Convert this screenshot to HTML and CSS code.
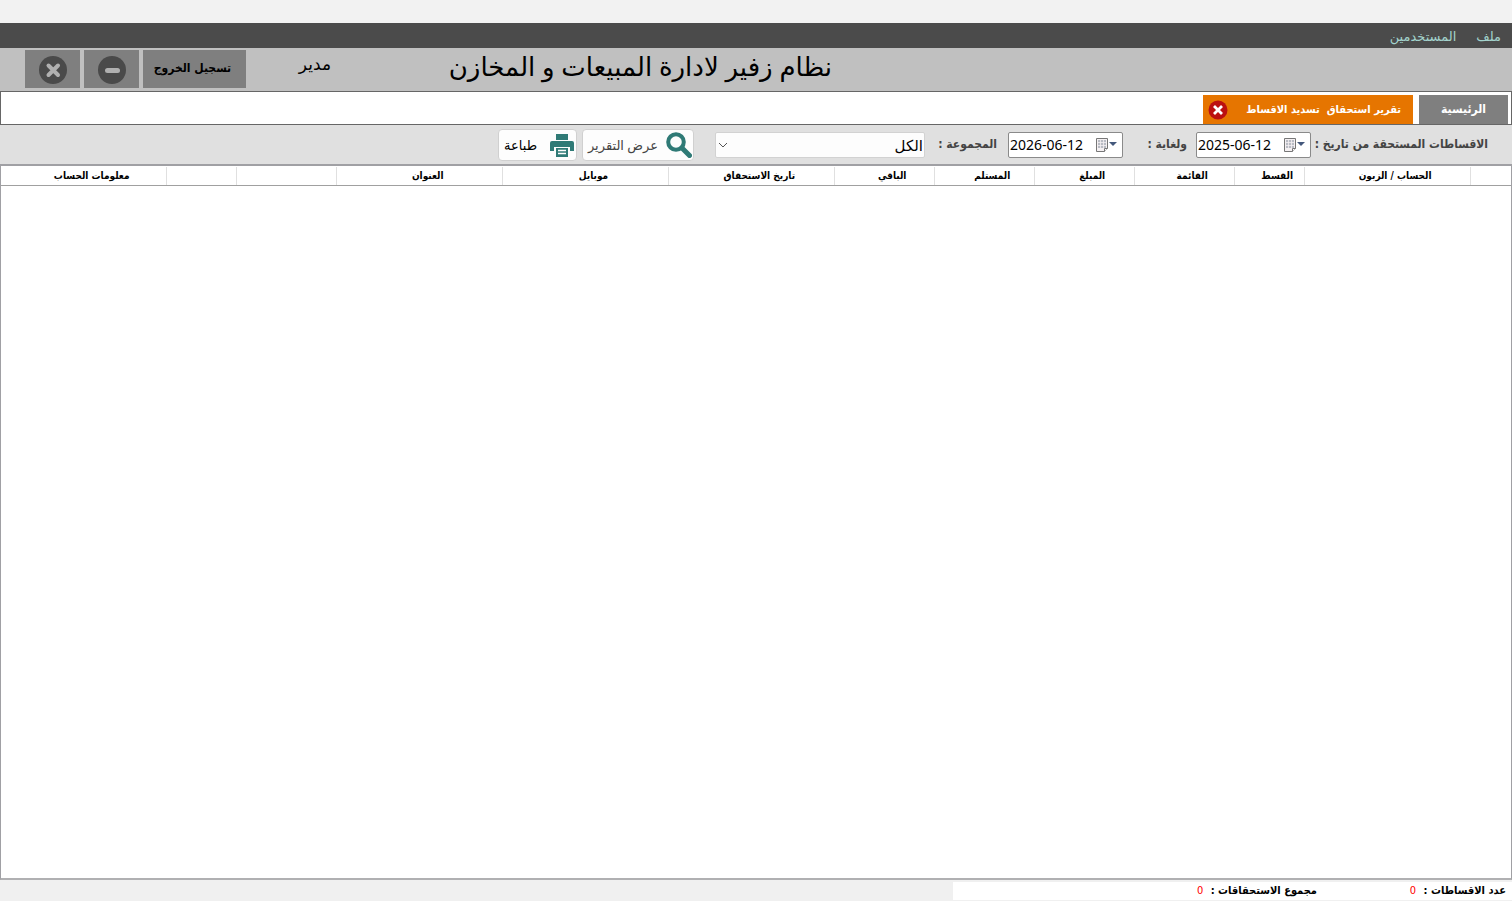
FILE: index.html
```html
<!DOCTYPE html>
<html lang="ar" dir="rtl">
<head>
<meta charset="utf-8">
<title>نظام زفير لادارة المبيعات و المخازن</title>
<link rel="stylesheet" href="styles.css">
</head>
<body>
<div class="app">
  <nav class="menu">
    <a href="#file">ملف</a>
    <a href="#users">المستخدمين</a>
  </nav>

  <header class="header">
    <button class="head-btn" type="button" aria-label="اغلاق">
      <svg width="28" height="28" viewBox="0 0 28 28"><circle cx="14" cy="14" r="14" fill="#4a4a4a"/><path d="M9.500 9.500l9.500 9.500M19 9.500l-9.500 9.500" stroke="#b0b0b0" stroke-width="4" stroke-linecap="round"/></svg>
    </button>
    <button class="head-btn" type="button" aria-label="تصغير">
      <svg width="28" height="28" viewBox="0 0 28 28"><circle cx="14" cy="14" r="14" fill="#4a4a4a"/><path d="M9.500 14.500h10" stroke="#b0b0b0" stroke-width="5" stroke-linecap="round"/></svg>
    </button>
    <button class="head-btn logout" type="button">تسجيل الخروج</button>
    <span class="user">مدير</span>
    <h1 class="title">نظام زفير لادارة المبيعات و المخازن</h1>
  </header>

  <div class="tabs">
    <a class="tab" href="#home">الرئيسية</a>
    <div class="tab active">
      <a href="#report">تقرير استحقاق&nbsp; تسديد الاقساط</a>
      <button class="tab-close" type="button" aria-label="اغلاق التبويب">
        <svg width="20" height="20" viewBox="0 0 20 20"><circle cx="10" cy="10" r="9.500" fill="#bc1010"/><path d="M6 6l8 8M14 6l-8 8" stroke="#fff" stroke-width="2.800"/></svg>
      </button>
    </div>
  </div>

  <form class="toolbar">
    <label class="label from" for="from">الاقساطات المستحقة من تاريخ :</label>
    <div class="date">
      <button type="button" class="date-btn" aria-label="اختيار التاريخ">
        <svg width="22" height="14" viewBox="0 0 22 14"><path d="M.5.5h11v10l-3 3h-8z" fill="#f4f0f2" stroke="#777"/><path d="M2 2h8v8H2z" fill="#b9bcc4"/><path d="M2 4.500h8M2 7.500h8M4.500 2v8M7.500 2v8" stroke="#f4f0f2" stroke-width=".8"/><path d="M8.500 13.500v-3h3" fill="#fff" stroke="#777"/><path d="M13 4h8l-4 4z" fill="#44587c"/></svg>
      </button>
      <input id="from" type="text" dir="ltr" value="2025-06-12">
    </div>
    <label class="label to" for="to">ولغاية :</label>
    <div class="date">
      <button type="button" class="date-btn" aria-label="اختيار التاريخ">
        <svg width="22" height="14" viewBox="0 0 22 14"><path d="M.5.5h11v10l-3 3h-8z" fill="#f4f0f2" stroke="#777"/><path d="M2 2h8v8H2z" fill="#b9bcc4"/><path d="M2 4.500h8M2 7.500h8M4.500 2v8M7.500 2v8" stroke="#f4f0f2" stroke-width=".8"/><path d="M8.500 13.500v-3h3" fill="#fff" stroke="#777"/><path d="M13 4h8l-4 4z" fill="#44587c"/></svg>
      </button>
      <input id="to" type="text" dir="ltr" value="2026-06-12">
    </div>
    <label class="label group" for="group">المجموعة :</label>
    <div class="select">
      <select id="group"><option>الكل</option></select>
      <svg class="chevron" width="10" height="6" viewBox="0 0 10 6"><path d="M1 1l4 4 4-4" fill="none" stroke="#555"/></svg>
    </div>
    <button class="action show" type="button">
      <svg width="26" height="26" viewBox="0 0 26 26" fill="none" stroke="#2f7a76"><circle cx="10" cy="10" r="7.800" stroke-width="4"/><path d="M16 16l7.500 7.500" stroke-width="5" stroke-linecap="round"/></svg>
      <span>عرض التقرير</span>
    </button>
    <button class="action print" type="button">
      <svg width="24" height="24" viewBox="0 0 24 24" fill="#2f7a76"><path d="M6 1h12v6H6z"/><path d="M2 8h20q2 0 2 2v8h-4v-4H4v4H0v-8q0-2 2-2z"/><path d="M6 15h12v9H6z"/><path d="M8 17.500h8M8 20.500h8" stroke="#fdfdfd" stroke-width="1.400"/></svg>
      <span>طباعة</span>
    </button>
  </form>

  <main class="grid">
    <table>
      <colgroup>
        <col class="c-mark"><col class="c-wide"><col class="c-small"><col class="c-mid"><col class="c-mid"><col class="c-mid"><col class="c-mid"><col class="c-wide"><col class="c-wide"><col class="c-wide"><col class="c-mid"><col class="c-small"><col class="c-wide">
      </colgroup>
      <thead>
        <tr>
          <th></th><th>الحساب / الزبون</th><th>القسط</th><th>القائمة</th><th>المبلغ</th><th>المستلم</th><th>الباقي</th><th>تاريخ الاستحقاق</th><th>موبايل</th><th>العنوان</th><th></th><th></th><th>معلومات الحساب</th>
        </tr>
      </thead>
      <tbody></tbody>
    </table>
  </main>

  <footer class="footer">
    <div class="totals">
      <div class="total">عدد الاقساطات : <span>0</span></div>
      <div class="total">مجموع الاستحقاقات : <span>0</span></div>
    </div>
  </footer>
</div>
</body>
</html>
```
FILE: styles.css
```css
* { box-sizing: border-box; }

body {
  margin: 0;
  background: #f2f2f2;
  color: #000;
  font-family: "Open Sans", "DejaVu Sans", sans-serif;
  font-size: 13px;
}

button, input, select { font: inherit; color: inherit; }
button { padding: 0; border: 0; background: none; }
a { color: inherit; text-decoration: none; }
svg { display: block; flex: none; }

.app {
  display: flex;
  flex-direction: column;
  min-height: 100vh;
  padding-top: 23px;
}

.menu {
  display: flex;
  align-items: center;
  gap: 20px;
  height: 25px;
  padding: 0 11px;
  background: #4b4b4b;
  color: #a3d3cd;
  font-size: 13px;
}

.header {
  display: flex;
  direction: ltr;
  align-items: flex-start;
  gap: 4px;
  height: 43px;
  padding: 2px 0 0 25px;
  background: #c0c0c0;
}

.head-btn {
  display: flex;
  align-items: center;
  justify-content: center;
  width: 55px;
  height: 38px;
  padding-top: 2px;
  background: #7f7f7f;
}

.head-btn.logout,
.tabs,
.label,
th,
.totals {
  font-family: "DejaVu Sans Condensed", "DejaVu Sans", sans-serif;
  font-weight: 700;
}

.head-btn.logout {
  width: 103px;
  padding: 0 4px 2px 0;
  font-size: 12px;
}

.user {
  width: 81px;
  font-size: 17px;
  line-height: 28px;
  text-align: right;
  direction: rtl;
}

.title {
  width: 497px;
  margin: 0;
  font-size: 26px;
  font-weight: 400;
  line-height: 32px;
  text-align: right;
  direction: rtl;
  white-space: nowrap;
}

.tabs {
  display: flex;
  gap: 6px;
  height: 34px;
  padding: 3px 3px 0;
  border: 1px solid #666;
  background: #fff;
  color: #fff;
  font-size: 12px;
}

.tab {
  width: 89px;
  background: #7f7f7f;
  line-height: 28px;
  text-align: center;
}

.tab.active {
  display: flex;
  align-items: center;
  justify-content: space-between;
  width: 210px;
  padding: 0 12px 0 5px;
  background: #e67500;
  font-size: 11px;
  white-space: nowrap;
}

.toolbar {
  display: flex;
  align-items: center;
  height: 39px;
  padding: 0 24px;
  background: #e0e0e0;
}

.label {
  flex: none;
  padding-bottom: 2px;
  color: #444;
  font-size: 12px;
  white-space: nowrap;
}

.from { width: 177px; }
.to { width: 73px; padding-right: 9px; }
.group { width: 83px; padding-right: 11px; }

.date {
  display: flex;
  align-items: center;
  width: 115px;
  height: 26px;
  border: 1px solid #8a8a8a;
  border-radius: 2px;
  background: #fff;
}

.date-btn { width: 22px; margin-right: 4px; direction: ltr; }

.date input {
  flex: 1;
  min-width: 0;
  height: 24px;
  padding: 0 0 0 1px;
  border: 0;
  outline: 0;
  background: none;
  font-family: "Noto Sans", sans-serif;
  font-size: 14px;
}

.select {
  position: relative;
  width: 210px;
  height: 26px;
}

.select select {
  width: 100%;
  height: 26px;
  padding: 0 1px;
  border: 1px solid #d2d2d2;
  border-radius: 2px;
  background: #fdfdfd;
  font-size: 15px;
  appearance: none;
}

.chevron {
  position: absolute;
  top: 10px;
  left: 3px;
}

.action {
  display: flex;
  align-items: center;
  height: 32px;
  border: 1px solid #d0d0d0;
  border-radius: 4px;
  background: #fdfdfd;
  font-size: 13px;
  white-space: nowrap;
}

.show {
  gap: 8px;
  width: 112px;
  margin-right: 21px;
  padding: 0 1px;
  color: #444;
}

.print {
  gap: 13px;
  width: 79px;
  margin-right: 5px;
  padding: 0 2px;
}

.grid {
  flex: 1;
  padding-top: 1px;
  border: 1px solid #a0a0a4;
  border-bottom: 2px solid #b0b0b2;
  border-top: 2px solid #a0a0a4;
  background: #fff;
}

table {
  width: 100%;
  table-layout: fixed;
  border-collapse: collapse;
}

.c-mark { width: 41px; }
.c-small { width: 70px; }
.c-mid { width: 100px; }

th {
  height: 18px;
  padding: 1px 0 0 16px;
  border-bottom: 1px solid #a0a0a0;
  border-left: 1px solid #e0e0e0;
  font-size: 10px;
  line-height: 14px;
  white-space: nowrap;
}

th:last-child { border-left: 0; }

.footer {
  height: 21px;
  padding: 2px 0 1px;
  background: #f0f0f0;
}

.totals {
  display: flex;
  width: 37%;
  height: 18px;
  padding-right: 6px;
  background: #fff;
  font-size: 11px;
  line-height: 18px;
}

.total { width: 189px; white-space: nowrap; }

.total span {
  margin-right: 4px;
  color: #f00;
  font-weight: 400;
}
```
